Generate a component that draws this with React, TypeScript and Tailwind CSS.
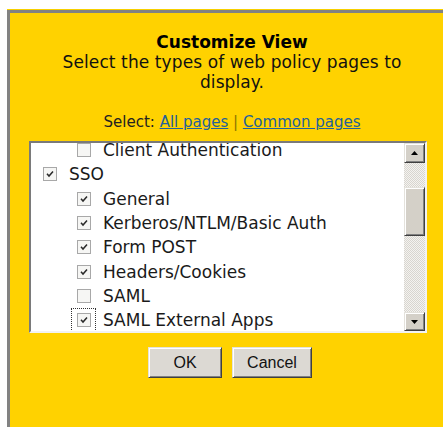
type Row = { label: string; level: 1 | 2; checked: boolean; focused?: boolean };

const ROWS: Row[] = [
  { label: 'Client Authentication', level: 2, checked: false },
  { label: 'SSO', level: 1, checked: true },
  { label: 'General', level: 2, checked: true },
  { label: 'Kerberos/NTLM/Basic Auth', level: 2, checked: true },
  { label: 'Form POST', level: 2, checked: true },
  { label: 'Headers/Cookies', level: 2, checked: true },
  { label: 'SAML', level: 2, checked: false },
  { label: 'SAML External Apps', level: 2, checked: true, focused: true },
  { label: 'SAML Internal Apps', level: 2, checked: true },
];

const bevel =
  'border border-t-[#e4e2dc] border-l-[#e4e2dc] border-r-[#404040] border-b-[#404040] shadow-[inset_1px_1px_0_#ffffff,inset_-1px_-1px_0_#808080]';

function Check({ checked }: { checked: boolean }) {
  return (
    <span className="flex h-[14px] w-[14px] items-center justify-center border border-[#a8a8a8] bg-[#f6f6f4]">
      {checked && (
        <svg width="10" height="10" viewBox="0 0 10 10">
          <path d="M2 4.8 L4 7 L8 2.4" fill="none" stroke="#2a2a2a" strokeWidth="1.5" />
        </svg>
      )}
    </span>
  );
}

function Arrow({ up }: { up?: boolean }) {
  return (
    <svg width="7" height="4" viewBox="0 0 7 4">
      <path d={up ? 'M0 4 L3.5 0 L7 4 Z' : 'M0 0 L7 0 L3.5 4 Z'} fill="#000" />
    </svg>
  );
}

function ScrollBar() {
  return (
    <div className="flex w-[21px] shrink-0 flex-col">
      <div className={`flex h-[20px] items-center justify-center bg-[#d4d0c8] ${bevel}`}>
        <Arrow up />
      </div>
      <div className="flex-1 bg-[repeating-conic-gradient(#d8d5cf_0%_25%,#f4f3f0_0%_50%)] bg-[length:2px_2px] pt-[24px]">
        <div className={`h-[49px] bg-[#d4d0c8] ${bevel}`} />
      </div>
      <div className={`flex h-[19px] items-center justify-center bg-[#d4d0c8] ${bevel}`}>
        <Arrow />
      </div>
    </div>
  );
}

function PageList() {
  return (
    <div className="ml-[19px] mt-[10px] flex h-[192px] w-[398px] border-2 border-t-[#7a7a7a] border-l-[#7a7a7a] border-r-[#f2f2f2] border-b-[#f2f2f2] bg-white">
      <div className="flex-1 overflow-hidden">
        <div className="-mt-[5px]">
          {ROWS.map((r) => (
            <div
              key={r.label}
              className={`flex h-[24.3px] items-center ${r.level === 1 ? 'pl-[6px]' : 'pl-[40px]'}`}
            >
              <span
                className={`flex h-[24px] w-[25px] items-center justify-center border border-dotted ${
                  r.focused ? 'border-[#333]' : 'border-transparent'
                }`}
              >
                <Check checked={r.checked} />
              </span>
              <span className="ml-[7px] whitespace-nowrap text-[17px] leading-[20px] text-[#1a1a1a]">{r.label}</span>
            </div>
          ))}
        </div>
      </div>
      <ScrollBar />
    </div>
  );
}

export default function App() {
  return (
    <div className="h-[427px] w-[443px] overflow-hidden bg-white pl-[7px] pt-[9px] font-['DejaVu_Sans',Verdana,sans-serif]">
      <div className="border-t border-[#f7d000]">
        <div className="h-[420px] w-[443px] border-l-[3px] border-t-[3px] border-[#828282] bg-[#ffd200] pt-[19px]">
          <div className="pl-[4px] text-center text-[17px] leading-[20px] text-[#111]">
            <h2 className="font-bold text-black">Customize View</h2>
            <p className="mx-auto w-[360px] tracking-[0.1px]">Select the types of web policy pages to display.</p>
          </div>

          <div className="mt-[21px] pl-[4px] text-center text-[15px] leading-[18px] text-[#222]">
            Select:{' '}
            <a className="text-[#23619b] underline">All pages</a>
            <span className="text-[#8a7400]"> | </span>
            <a className="text-[#23619b] underline">Common pages</a>
          </div>

          <PageList />

          <div className="mt-[14px] flex justify-center gap-[10px] font-['Liberation_Sans',Arial,sans-serif] text-[16px] text-[#111]">
            <button className={`h-[31px] w-[74px] bg-[#dcd9d3] ${bevel}`}>OK</button>
            <button className={`h-[31px] w-[80px] bg-[#dcd9d3] ${bevel}`}>Cancel</button>
          </div>
        </div>
      </div>
    </div>
  );
}
